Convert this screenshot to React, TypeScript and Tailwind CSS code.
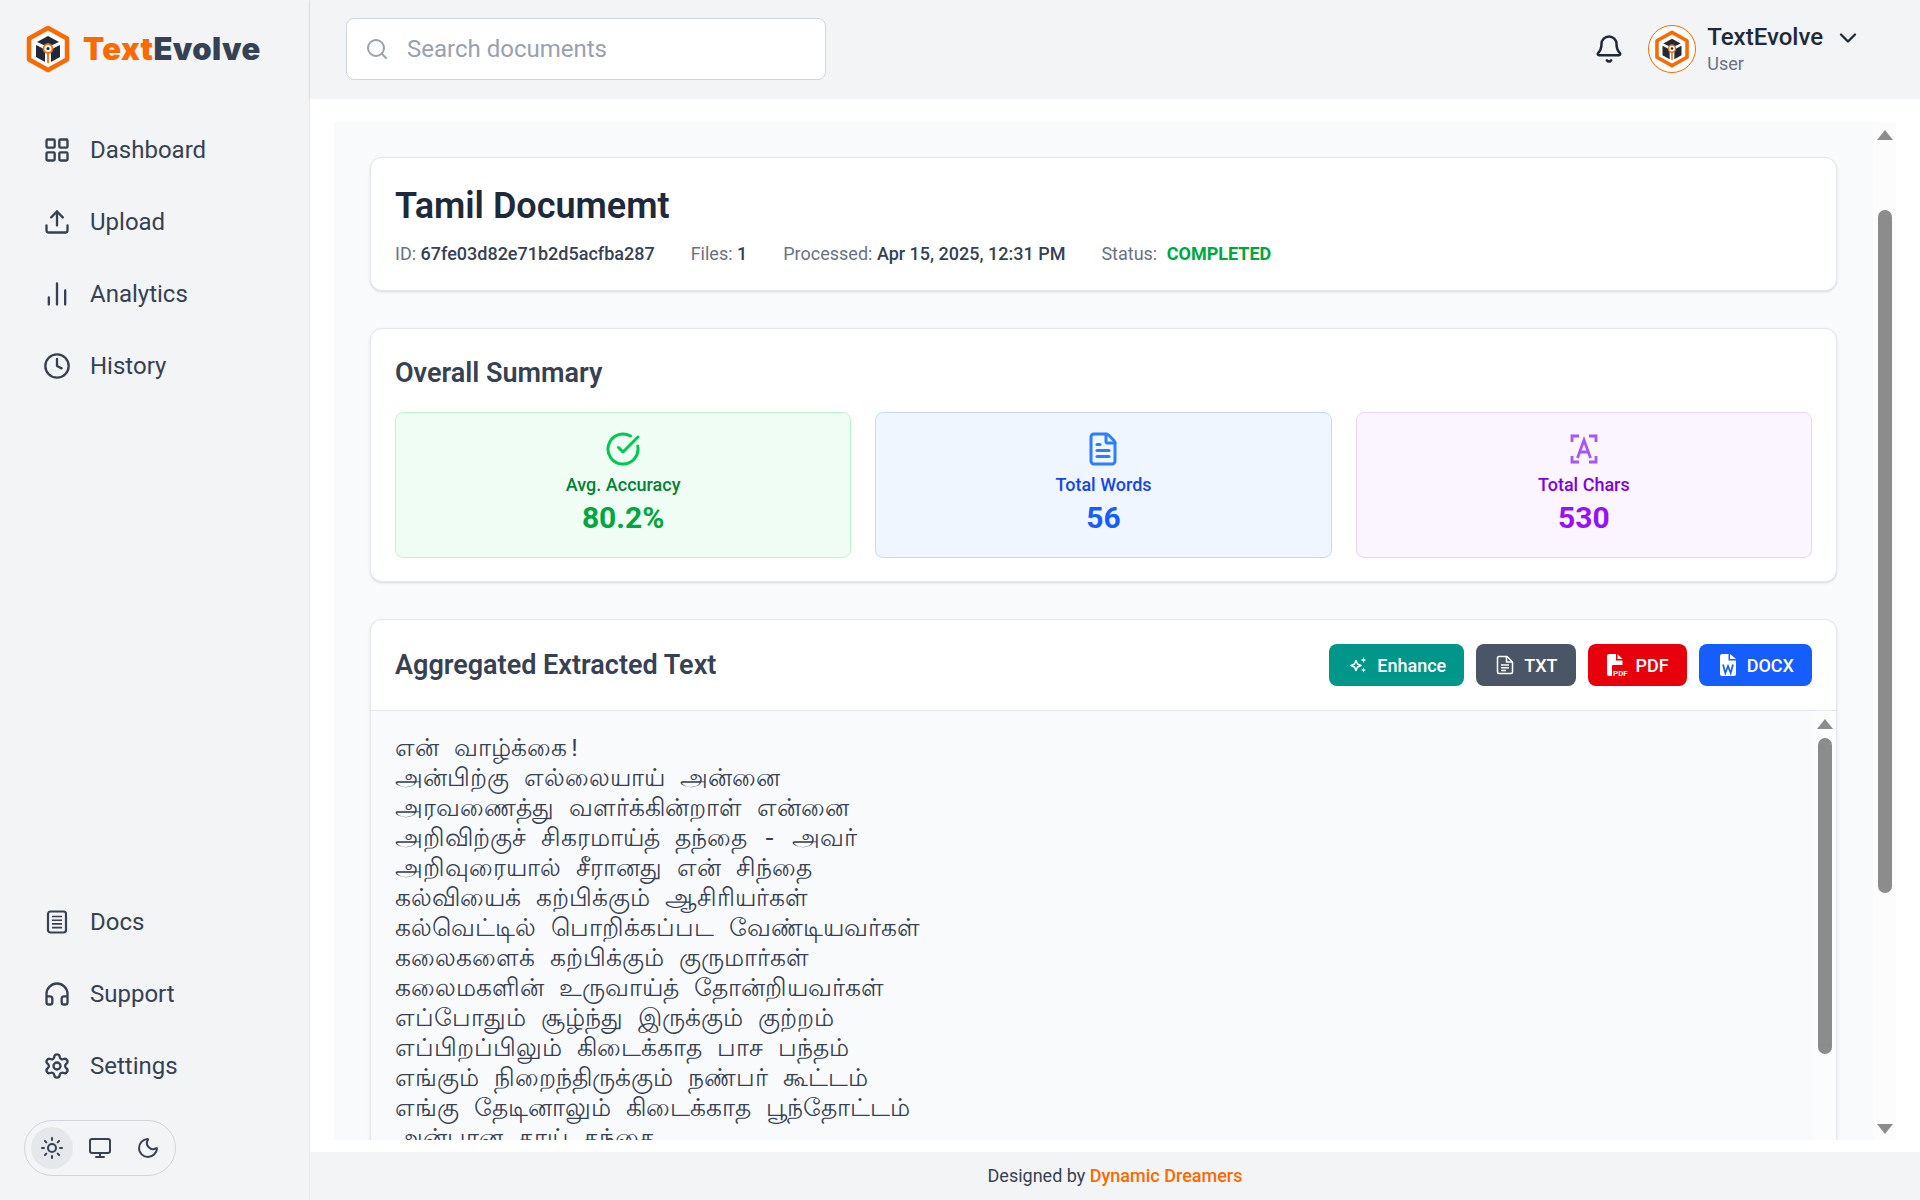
import { Bell, ChartNoAxesColumn, ChevronDown, CircleCheckBig, Clock, FileText, Headphones, LayoutGrid, Monitor, Moon, Search, Settings, Sun, Upload } from 'lucide-react';

const lines = [
  'என் வாழ்க்கை!',
  'அன்பிற்கு எல்லையாய் அன்னை',
  'அரவணைத்து வளர்க்கின்றாள் என்னை',
  'அறிவிற்குச் சிகரமாய்த் தந்தை - அவர்',
  'அறிவுரையால் சீரானது என் சிந்தை',
  'கல்வியைக் கற்பிக்கும் ஆசிரியர்கள்',
  'கல்வெட்டில் பொறிக்கப்பட வேண்டியவர்கள்',
  'கலைகளைக் கற்பிக்கும் குருமார்கள்',
  'கலைமகளின் உருவாய்த் தோன்றியவர்கள்',
  'எப்போதும் சூழ்ந்து இருக்கும் குற்றம்',
  'எப்பிறப்பிலும் கிடைக்காத பாச பந்தம்',
  'எங்கும் நிறைந்திருக்கும் நண்பர் கூட்டம்',
  'எங்கு தேடினாலும் கிடைக்காத பூந்தோட்டம்',
  'அன்பான தாய் தந்தை',
];

function Logo({ size }: { size: number }) {
  return (
    <svg width={size} height={size} viewBox="0 0 48 48" fill="none">
      <path d="M24 3 43 13.500V34.500L24 45 5 34.500V13.500Z" fill="#fff" stroke="#f96a00" strokeWidth="4.500" strokeLinejoin="round" />
      <path d="M24 11 35 17 24 22 13 17Z" fill="#1e293b" />
      <path d="M12 20 21 24.500V37L12 32Z" fill="#1e293b" />
      <path d="M36 20 27 24.500V37L36 32Z" fill="#1e293b" />
      <circle cx="24" cy="23.500" r="4.500" fill="#fff" stroke="#f96a00" strokeWidth="1.800" />
      <circle cx="24" cy="23.500" r="1.600" fill="#1e293b" />
      <path d="M24 28V38" stroke="#f96a00" strokeWidth="1.800" />
    </svg>
  );
}

function DocsIcon() {
  return (
    <svg width="28" height="28" viewBox="0 0 28 28" fill="none" stroke="currentColor">
      <rect x="5" y="3.500" width="18" height="21" rx="2.500" strokeWidth="2.200" />
      <path d="M9 8.500h10M9 12.200h10M9 15.900h10M9 19.600h10" strokeWidth="1.600" />
    </svg>
  );
}

function CharsIcon() {
  return (
    <svg width="36" height="36" viewBox="0 0 36 36" fill="none" stroke="#a855f7" strokeWidth="2.800">
      <path d="M6 11V5h7M23 5h7v6M6 25v6h7M23 31h7v-6" />
      <path d="M11.500 27 18 9l6.500 18M13.700 21h8.600" />
    </svg>
  );
}

function SparkIcon() {
  return (
    <svg width="22" height="22" viewBox="0 0 22 22" fill="#fff">
      <path d="M9 6.500 10.500 10 14 11.500 10.500 13 9 16.500 7.500 13 4 11.500 7.500 10Z" fill="none" stroke="#fff" strokeWidth="1.500" strokeLinejoin="round" />
      <path d="M16.500 3 17.300 5.200 19.500 6 17.300 6.800 16.500 9 15.700 6.800 13.500 6 15.700 5.200Z" />
      <path d="M16.500 13.500 17.200 15.300 19 16 17.200 16.700 16.500 18.500 15.800 16.700 14 16 15.800 15.300Z" />
    </svg>
  );
}

function TxtIcon() {
  return (
    <svg width="22" height="22" viewBox="0 0 22 22" fill="none" stroke="#fff" strokeWidth="1.500" strokeLinejoin="round">
      <path d="M5 2.500h8L18.500 8v10a1.500 1.500 0 0 1-1.500 1.500H5A1.500 1.500 0 0 1 3.500 18V4A1.500 1.500 0 0 1 5 2.500Z" />
      <path d="M12.500 2.500V8h6M7 11h8M7 13.800h8M7 16.600h5" />
    </svg>
  );
}

function PdfIcon() {
  return (
    <svg width="22" height="24" viewBox="0 0 22 24" fill="#fff">
      <path d="M1 3a2 2 0 0 1 2-2h7v6.500h6.500V12H7a1 1 0 0 0-1 1v10H3a2 2 0 0 1-2-2Z" />
      <path d="M11.500 1 16.500 6H11.500Z" />
      <text x="7" y="22.500" fontSize="8" fontWeight="700" fontFamily="Roboto, sans-serif" fill="#fff">PDF</text>
    </svg>
  );
}

function WordIcon() {
  return (
    <svg width="22" height="24" viewBox="0 0 22 24" fill="#fff">
      <path d="M3 3a2 2 0 0 1 2-2h6.500v6.500H19V21a2 2 0 0 1-2 2H5a2 2 0 0 1-2-2Z" />
      <path d="M13 1 19 6H13Z" />
      <path d="M6 11.500 8.300 20 11 13 13.700 20 16 11.500" fill="none" stroke="#155dfc" strokeWidth="1.700" />
    </svg>
  );
}

function NavItem({ icon, label }: { icon: React.ReactNode; label: string }) {
  return (
    <a href="#" className="flex h-[48px] items-center gap-[19px] pl-[43px] text-[24px] text-gray-700">
      <span className="flex w-[28px] justify-center">{icon}</span>
      {label}
    </a>
  );
}

function Stat({ icon, label, value, box, labelColor, valueColor }: { icon: React.ReactNode; label: string; value: string; box: string; labelColor: string; valueColor: string }) {
  return (
    <div className={`flex h-[146px] flex-col items-center rounded-lg border pt-[18px] ${box}`}>
      {icon}
      <div className={`mt-[4px] text-[18px] leading-[28px] font-medium ${labelColor}`}>{label}</div>
      <div className={`mt-[1px] text-[30px] leading-[36px] font-bold ${valueColor}`}>{value}</div>
    </div>
  );
}

function ActionButton({ icon, label, color }: { icon: React.ReactNode; label: string; color: string }) {
  return (
    <button className={`flex h-[42px] items-center gap-[8px] rounded-lg px-[18px] text-[18px] font-medium text-white ${color}`}>
      {icon}
      {label}
    </button>
  );
}

function ScrollTrack({ thumb }: { thumb: string }) {
  return (
    <div className="flex w-[23px] shrink-0 flex-col items-center bg-[#fcfcfc]">
      <div className="mt-[8px] h-0 w-0 border-x-[8px] border-b-[10px] border-x-transparent border-b-[#8c8c8c]" />
      <div className={`w-[14px] shrink-0 rounded-full bg-[#8c8c8c] ${thumb}`} />
      <div className="mt-auto mb-[6px] h-0 w-0 border-x-[8px] border-t-[10px] border-x-transparent border-t-[#8c8c8c]" />
    </div>
  );
}

export default function App() {
  return (
    <div className="flex h-[1200px] w-[1920px] overflow-hidden bg-white font-['Roboto',sans-serif]">
      <aside className="flex w-[310px] shrink-0 flex-col border-r border-gray-200 bg-gray-100 pb-[24px]">
        <div className="flex h-[98px] items-center gap-[11px] pl-[24px]">
          <Logo size={48} />
          <span className="font-['Inter',sans-serif] text-[31px] font-black tracking-[0.4px] text-gray-700">
            <span className="text-[#f96a00]">Text</span>Evolve
          </span>
        </div>
        <nav className="mt-[28px] flex flex-col gap-[24px]">
          <NavItem icon={<LayoutGrid size={32} />} label="Dashboard" />
          <NavItem icon={<Upload size={32} />} label="Upload" />
          <NavItem icon={<ChartNoAxesColumn size={32} />} label="Analytics" />
          <NavItem icon={<Clock size={32} />} label="History" />
        </nav>
        <div className="mt-auto flex flex-col gap-[24px]">
          <NavItem icon={<DocsIcon />} label="Docs" />
          <NavItem icon={<Headphones size={32} />} label="Support" />
          <NavItem icon={<Settings size={34} />} label="Settings" />
        </div>
        <div className="mt-[30px] ml-[24px] flex h-[56px] w-[152px] items-center gap-[6px] rounded-full border border-gray-300 px-[6px] text-gray-700">
          <span className="flex h-[42px] w-[42px] items-center justify-center rounded-full bg-gray-200"><Sun size={24} /></span>
          <span className="flex h-[42px] w-[42px] items-center justify-center"><Monitor size={24} /></span>
          <span className="flex h-[42px] w-[42px] items-center justify-center"><Moon size={24} /></span>
        </div>
      </aside>

      <div className="flex min-w-0 flex-1 flex-col">
        <header className="flex h-[99px] shrink-0 items-center bg-gray-100 pr-[58px] pb-[2px] pl-[36px] shadow-sm">
          <div className="flex h-[62px] w-[480px] items-center gap-[18px] rounded-lg border border-gray-300 bg-white pl-[18px]">
            <Search size={24} className="text-gray-400" />
            <span className="text-[24px] text-gray-400">Search documents</span>
          </div>
          <div className="ml-auto flex items-center">
            <Bell size={30} className="mr-[24px] text-gray-800" />
            <div className="flex h-[48px] w-[48px] items-center justify-center rounded-full border border-[#f96a00] bg-white">
              <Logo size={38} />
            </div>
            <div className="ml-[11px] pt-[2px]">
              <div className="text-[24px] leading-[28px] font-medium text-gray-800">TextEvolve</div>
              <div className="pt-[1px] text-[18px] leading-[24px] text-gray-500">User</div>
            </div>
            <ChevronDown size={28} className="mb-[22px] ml-[11px] text-gray-800" />
          </div>
        </header>

        <main className="flex min-h-0 flex-1 bg-white px-[24px] pt-[23px] pb-[12px]">
          <div className="flex min-w-0 flex-1 bg-gray-50">
            <div className="flex min-w-0 flex-1 flex-col gap-[37px] overflow-hidden px-[36px] pt-[35px]">
              <section className="shrink-0 rounded-xl border border-gray-200 bg-white p-[24px] shadow-sm">
                <h1 className="text-[36px] leading-[48px] font-semibold text-gray-800">Tamil Documemt</h1>
                <div className="mt-[12px] flex gap-[36px] text-[18px] leading-[24px] text-gray-500">
                  <span>ID: <span className="font-medium text-gray-700">67fe03d82e71b2d5acfba287</span></span>
                  <span>Files: <span className="font-medium text-gray-700">1</span></span>
                  <span>Processed: <span className="font-medium text-gray-700">Apr 15, 2025, 12:31 PM</span></span>
                  <span>Status: <span className="ml-[5px] font-bold text-green-600">COMPLETED</span></span>
                </div>
              </section>

              <section className="shrink-0 rounded-xl border border-gray-200 bg-white px-[24px] pt-[24px] pb-[23px] shadow-sm">
                <h2 className="text-[27px] leading-[40px] font-semibold text-gray-700">Overall Summary</h2>
                <div className="mt-[19px] grid grid-cols-3 gap-[24px]">
                  <Stat icon={<CircleCheckBig size={36} className="text-[#00c950]" />} label="Avg. Accuracy" value="80.2%" box="border-green-200 bg-green-50" labelColor="text-green-700" valueColor="text-green-600" />
                  <Stat icon={<FileText size={36} className="text-blue-500" />} label="Total Words" value="56" box="border-blue-200 bg-blue-50" labelColor="text-blue-700" valueColor="text-blue-600" />
                  <Stat icon={<CharsIcon />} label="Total Chars" value="530" box="border-purple-200 bg-purple-50" labelColor="text-purple-700" valueColor="text-purple-600" />
                </div>
              </section>

              <section className="flex min-h-[600px] shrink-0 flex-col rounded-xl border border-gray-200 bg-white shadow-sm">
                <div className="flex h-[91px] shrink-0 items-center justify-between border-b border-gray-200 px-[24px]">
                  <h2 className="text-[27px] font-semibold text-gray-700">Aggregated Extracted Text</h2>
                  <div className="flex gap-[12px]">
                    <ActionButton icon={<SparkIcon />} label="Enhance" color="bg-teal-600" />
                    <ActionButton icon={<TxtIcon />} label="TXT" color="bg-gray-600" />
                    <ActionButton icon={<PdfIcon />} label="PDF" color="bg-red-600" />
                    <ActionButton icon={<WordIcon />} label="DOCX" color="bg-blue-600" />
                  </div>
                </div>
                <div className="flex h-[500px] bg-gray-50">
                  <div className="flex-1 overflow-hidden px-[24px] pt-[24px] font-mono text-[25px] leading-[30px] text-gray-700">
                    {lines.map((line) => (
                      <div key={line}>{line}</div>
                    ))}
                  </div>
                  <ScrollTrack thumb="mt-[9px] h-[316px]" />
                </div>
              </section>
            </div>
            <ScrollTrack thumb="mt-[70px] h-[683px]" />
          </div>
        </main>

        <footer className="flex h-[48px] shrink-0 items-center justify-center bg-gray-100 pb-[2px] text-[18px] text-gray-700">
          Designed by&nbsp;<span className="font-medium text-[#f96a00]">Dynamic Dreamers</span>
        </footer>
      </div>
    </div>
  );
}
